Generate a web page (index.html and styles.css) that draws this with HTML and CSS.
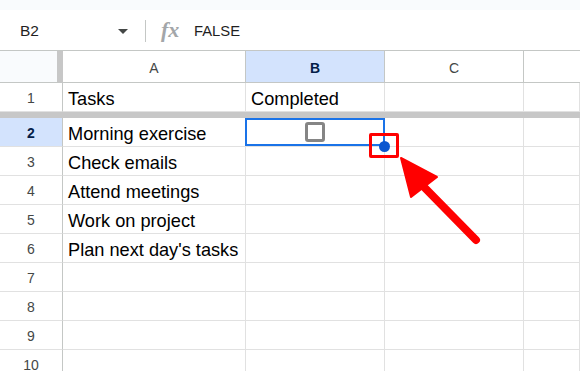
FILE: index.html
```html
<!DOCTYPE html>
<html>
<head>
<meta charset="utf-8">
<link rel="stylesheet" href="styles.css">
</head>
<body>
<div class="page">
  <div class="topstrip"></div>
  <div class="formula">
    <div class="namebox">
      <span class="ref">B2</span>
      <span class="caret"></span>
    </div>
    <div class="sep"></div>
    <span class="fx">fx</span>
    <span class="fval">FALSE</span>
  </div>
  <div class="sheet">
    <div class="corner"></div>
    <div class="ch">A</div>
    <div class="ch sel">B</div>
    <div class="ch">C</div>
    <div class="ch last"></div>

    <div class="rh">1</div>
    <div class="c">Tasks</div>
    <div class="c">Completed</div>
    <div class="c"></div>
    <div class="c"></div>

    <div class="freeze"></div>

    <div class="rh sel">2</div>
    <div class="c">Morning exercise</div>
    <div class="c center"><span class="checkbox"></span></div>
    <div class="c"></div>
    <div class="c"></div>

    <div class="rh">3</div>
    <div class="c">Check emails</div>
    <div class="c"></div><div class="c"></div><div class="c"></div>

    <div class="rh">4</div>
    <div class="c">Attend meetings</div>
    <div class="c"></div><div class="c"></div><div class="c"></div>

    <div class="rh">5</div>
    <div class="c">Work on project</div>
    <div class="c"></div><div class="c"></div><div class="c"></div>

    <div class="rh">6</div>
    <div class="c">Plan next day's tasks</div>
    <div class="c"></div><div class="c"></div><div class="c"></div>

    <div class="rh">7</div>
    <div class="c"></div><div class="c"></div><div class="c"></div><div class="c"></div>

    <div class="rh">8</div>
    <div class="c"></div><div class="c"></div><div class="c"></div><div class="c"></div>

    <div class="rh">9</div>
    <div class="c"></div><div class="c"></div><div class="c"></div><div class="c"></div>

    <div class="rh">10</div>
    <div class="c"></div><div class="c"></div><div class="c"></div><div class="c"></div>
  </div>

  <div class="selection"></div>
  <div class="highlight"></div>
  <div class="handle"></div>
  <svg class="arrow" width="580" height="371" viewBox="0 0 580 371">
    <line x1="423" y1="186" x2="476" y2="240" stroke="#ff0000" stroke-width="8" stroke-linecap="round"/>
    <polygon points="401,158 411,197 437,177" fill="#ff0000" stroke="#ff0000" stroke-width="2" stroke-linejoin="round"/>
  </svg>
</div>
</body>
</html>
```

FILE: styles.css
```css
html, body {
  margin: 0;
  padding: 0;
  background: #ffffff;
  overflow: hidden;
}

.page {
  position: relative;
  width: 580px;
  height: 371px;
  overflow: hidden;
  font-family: "Liberation Sans", Arial, sans-serif;
  color: #000000;
}

.topstrip {
  height: 10px;
  background: #f9fbfd;
}

.formula {
  height: 40px;
  display: flex;
  align-items: center;
  background: #ffffff;
}

.namebox {
  width: 128px;
  display: flex;
  align-items: center;
  padding-left: 20px;
  box-sizing: border-box;
  justify-content: space-between;
}

.ref {
  font-size: 15.5px;
  color: #1f1f1f;
  margin-top: 1px;
}

.caret {
  width: 0;
  height: 0;
  border-left: 5px solid transparent;
  border-right: 5px solid transparent;
  border-top: 5px solid #444746;
  margin-top: 2px;
}

.sep {
  width: 1px;
  height: 22px;
  background: #c4c7c5;
  margin-left: 17px;
  margin-top: 2px;
}

.fx {
  font-family: "Liberation Serif", "Times New Roman", serif;
  font-style: italic;
  font-weight: bold;
  font-size: 22px;
  color: #a3a6a9;
  margin-left: 15px;
  width: 20px;
}

.fval {
  font-size: 14.8px;
  color: #1f1f1f;
  margin-left: 13px;
  margin-top: 1px;
}

.sheet {
  display: grid;
  grid-template-columns: 63px 183px 139px 139px 1fr;
  grid-template-rows: 32px 29px 6px repeat(9, 29px);
  border-top: 1px solid #c4c7c5;
}

.corner {
  background: #f9fbfd;
  border-right: 6px solid #c7c7c7;
  border-bottom: 1px solid #c4c7c5;
  box-sizing: border-box;
}

.ch {
  display: flex;
  align-items: center;
  justify-content: center;
  font-size: 14px;
  color: #444746;
  border-right: 1px solid #c4c7c5;
  border-bottom: 1px solid #c4c7c5;
  box-sizing: border-box;
  padding-top: 2px;
}

.ch.sel {
  background: #d3e3fd;
  color: #041e49;
  font-weight: bold;
}

.ch.last {
  border-right: none;
}

.rh {
  display: flex;
  align-items: center;
  justify-content: center;
  font-size: 14px;
  color: #444746;
  border-right: 1px solid #c4c7c5;
  border-bottom: 1px solid #e1e1e1;
  box-sizing: border-box;
  padding-top: 2px;
}

.rh.sel {
  background: #d3e3fd;
  color: #041e49;
  font-weight: bold;
}

.c {
  display: flex;
  align-items: flex-end;
  padding: 0 0 2px 5px;
  font-size: 18.2px;
  line-height: 20px;
  color: #000000;
  white-space: nowrap;
  border-right: 1px solid #e1e1e1;
  border-bottom: 1px solid #e1e1e1;
  box-sizing: border-box;
  overflow: visible;
}

.c.center {
  align-items: center;
  justify-content: center;
  padding: 0;
}

.checkbox {
  width: 20px;
  height: 20px;
  box-sizing: border-box;
  border: 3px solid #858585;
  border-radius: 3px;
}

.freeze {
  grid-column: 1 / -1;
  background: #c7c7c7;
}

.selection {
  position: absolute;
  left: 245px;
  top: 118px;
  width: 140px;
  height: 28px;
  box-sizing: border-box;
  border: 2px solid #1a73e8;
}

.highlight {
  position: absolute;
  left: 369px;
  top: 133px;
  width: 30px;
  height: 25px;
  box-sizing: border-box;
  border: 3px solid #ff0000;
  border-radius: 2px;
}

.handle {
  position: absolute;
  left: 379px;
  top: 141px;
  width: 11px;
  height: 11px;
  border-radius: 50%;
  background: #0b57d0;
}

.arrow {
  position: absolute;
  left: 0;
  top: 0;
}
```
